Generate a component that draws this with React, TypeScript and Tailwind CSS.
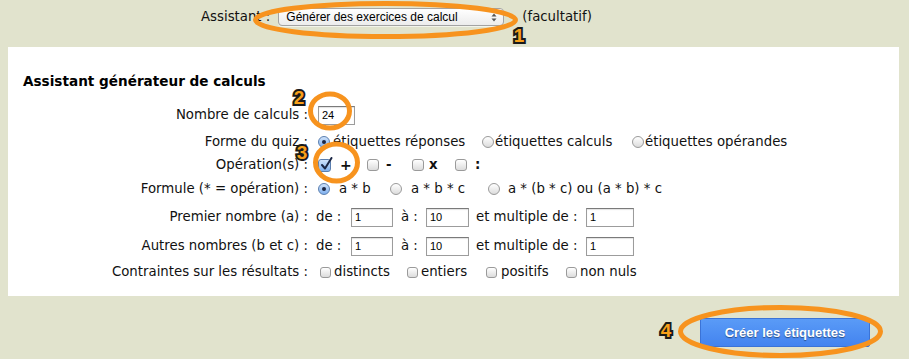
import React from 'react'

const font = "font-['DejaVu_Sans',Verdana,sans-serif]"

function Radio({ checked = false }: { checked?: boolean }) {
  return (
    <span
      className={`inline-flex items-center justify-center w-[12px] h-[12px] rounded-full border shrink-0 ${
        checked
          ? 'border-[#5b7fb0] bg-gradient-to-b from-[#cfe2fa] to-[#7fb0ee]'
          : 'border-[#9a9a9a] bg-gradient-to-b from-white to-[#dcdcdc]'
      }`}
    >
      {checked && <span className="w-[4px] h-[4px] rounded-full bg-[#1b2645]" />}
    </span>
  )
}

function Check({ checked = false, size = 12 }: { checked?: boolean; size?: number }) {
  if (checked) {
    return (
      <span className="relative inline-block w-[13px] h-[13px] rounded-[3px] border border-[#5b7fb0] bg-gradient-to-b from-[#cfe2fa] to-[#7fb0ee] shrink-0">
        <svg className="absolute left-[1px] top-[-3px]" width="13" height="14" viewBox="0 0 13 14">
          <path d="M2 8 L5 11.5 L11.5 1" fill="none" stroke="#1b2645" strokeWidth="2" strokeLinecap="round" strokeLinejoin="round" />
        </svg>
      </span>
    )
  }
  return (
    <span
      className={`inline-block ${size === 11 ? 'w-[11px] h-[11px]' : 'w-[12px] h-[12px]'} rounded-[3px] border border-[#9a9a9a] bg-gradient-to-b from-white to-[#dcdcdc] shrink-0`}
    />
  )
}

function Field({ value, w }: { value: string; w: string }) {
  return (
    <span
      className={`inline-flex items-center h-[19px] ${w} border border-[#9c9c9c] border-t-[#7a7a7a] bg-white pl-[3px] text-[11px] text-black font-['Liberation_Sans',Arial,sans-serif] shadow-[inset_0_1px_1px_rgba(0,0,0,0.12)] shrink-0`}
    >
      {value}
    </span>
  )
}

function Row({ label, h, children }: { label: string; h: string; children: React.ReactNode }) {
  return (
    <div className={`flex items-center ${h}`}>
      <div className="w-[301px] text-right pr-[1px] whitespace-nowrap">{label}</div>
      <div className="flex items-center pl-[7px] whitespace-nowrap">{children}</div>
    </div>
  )
}

function Badge({ n, pos }: { n: string; pos: string }) {
  return (
    <span
      className={`absolute ${pos} -translate-x-1/2 leading-none text-[19px] font-bold text-[#f8a01a] font-['Liberation_Sans',Arial,sans-serif] [-webkit-text-stroke:4px_#1a1a1a] [paint-order:stroke_fill]`}
    >
      {n}
    </span>
  )
}

export default function App() {
  return (
    <div className={`relative w-[909px] h-[359px] overflow-hidden bg-[#e1e3cd] text-[13.3px] text-[#111] ${font}`}>
      {/* top select row */}
      <div className="flex items-center h-[34px] pl-[201px]">
        <span className="mr-[8px]">Assistant :</span>
        <span className="relative flex items-center w-[226px] h-[18px] rounded-[4px] border border-[#a3a3a3] bg-gradient-to-b from-white to-[#ececec] pl-[7px] text-[12px] font-['Liberation_Sans',Arial,sans-serif] text-black shadow-[0_1px_0_rgba(255,255,255,0.6)]">
          Générer des exercices de calcul
          <svg className="absolute right-[6px] top-[4px]" width="6" height="9" viewBox="0 0 6 9">
            <path d="M0.5 3.5 L3 0.5 L5.5 3.5 Z M0.5 5.5 L3 8.5 L5.5 5.5 Z" fill="#555" />
          </svg>
        </span>
        <span className="ml-[18px]">(facultatif)</span>
      </div>

      {/* main panel */}
      <div className="mx-[8px] mt-[13px] bg-white pt-[24px] pb-[13px] w-[891px]">
        <div className="h-[20px] flex items-center pl-[15px] font-bold text-[13.6px] text-black">
          Assistant générateur de calculs
        </div>
        <div className="mt-[10px]">
          <Row label="Nombre de calculs :" h="h-[28px]">
            <span className="ml-[2px]">
              <Field value="24" w="w-[37px]" />
            </span>
          </Row>
          <Row label="Forme du quiz :" h="h-[26px]">
            <span className="flex items-center w-[164px] ml-[2px]">
              <Radio checked />
              <span className="ml-[3px]">étiquettes réponses</span>
            </span>
            <span className="flex items-center w-[150px]">
              <Radio />
              <span className="ml-[1px]">étiquettes calculs</span>
            </span>
            <span className="flex items-center">
              <Radio />
              <span className="ml-[1px]">étiquettes opérandes</span>
            </span>
          </Row>
          <Row label="Opération(s) :" h="h-[20px]">
            <span className="flex items-center w-[49px] ml-[2px]">
              <Check checked />
              <span className="ml-[9px] font-bold text-[14px]">+</span>
            </span>
            <span className="flex items-center w-[45px]">
              <Check />
              <span className="ml-[7px] font-bold">-</span>
            </span>
            <span className="flex items-center w-[43px]">
              <Check />
              <span className="ml-[5px] font-bold">x</span>
            </span>
            <span className="flex items-center">
              <Check />
              <span className="ml-[8px] font-bold">:</span>
            </span>
          </Row>
          <Row label="Formule (* = opération) :" h="h-[28px]">
            <span className="flex items-center w-[72px] ml-[2px]">
              <Radio checked />
              <span className="ml-[9px]">a * b</span>
            </span>
            <span className="flex items-center w-[98px]">
              <Radio />
              <span className="ml-[9px]">a * b * c</span>
            </span>
            <span className="flex items-center">
              <Radio />
              <span className="ml-[8px]">a * (b * c) ou (a * b) * c</span>
            </span>
          </Row>
          {['Premier nombre (a) :', 'Autres nombres (b et c) :'].map((label, i) => (
            <Row key={label} label={label} h={i === 0 ? 'h-[28px]' : 'h-[30px]'}>
              <span className="w-[35px]">de :</span>
              <Field value="1" w="w-[42px]" />
              <span className="w-[25px] ml-[8px]">à :</span>
              <Field value="10" w="w-[43px]" />
              <span className="w-[110px] ml-[7px]">et multiple de :</span>
              <Field value="1" w="w-[48px]" />
            </Row>
          ))}
          <Row label="Contraintes sur les résultats :" h="h-[22px]">
            <span className="flex items-center w-[87px] ml-[4px]">
              <Check size={11} />
              <span className="ml-[3px]">distincts</span>
            </span>
            <span className="flex items-center w-[79px]">
              <Check size={11} />
              <span className="ml-[3px]">entiers</span>
            </span>
            <span className="flex items-center w-[80px]">
              <Check size={11} />
              <span className="ml-[4px]">positifs</span>
            </span>
            <span className="flex items-center">
              <Check size={11} />
              <span className="ml-[3px]">non nuls</span>
            </span>
          </Row>
        </div>
      </div>

      {/* button */}
      <div className="flex justify-end pr-[39px] mt-[22px]">
        <button className="w-[170px] h-[29px] rounded-[2px] border border-[#3b73d6] bg-gradient-to-b from-[#5a9bf7] to-[#4383ef] text-white font-bold text-[13px] font-['Liberation_Sans',Arial,sans-serif] [text-shadow:0_1px_1px_rgba(0,0,0,0.45)]">
          Créer les étiquettes
        </button>
      </div>

      {/* annotations */}
      <svg className="absolute inset-0 pointer-events-none" width="909" height="359" viewBox="0 0 909 359">
        <g fill="none" stroke="#f7931e" strokeWidth="5">
          <ellipse cx="385.5" cy="20" rx="130" ry="16.5" />
          <ellipse cx="330" cy="111" rx="19.5" ry="17" />
          <ellipse cx="336.5" cy="162.5" rx="21" ry="18.5" />
          <ellipse cx="780.5" cy="331.5" rx="100" ry="24" />
        </g>
      </svg>
      <Badge n="1" pos="left-[519px] top-[26px]" />
      <Badge n="2" pos="left-[299px] top-[88px]" />
      <Badge n="3" pos="left-[302px] top-[143px]" />
      <Badge n="4" pos="left-[666px] top-[321px]" />
    </div>
  )
}
